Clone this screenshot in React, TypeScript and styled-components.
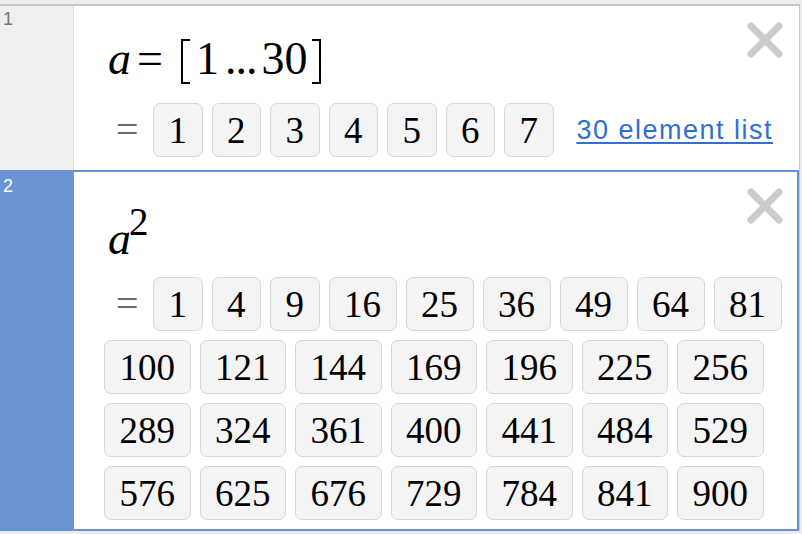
import React from "react";
import styled, { createGlobalStyle } from "styled-components";

const GlobalStyle = createGlobalStyle`
  html, body {
    margin: 0;
    padding: 0;
    background: #ececec;
  }
  body {
    font-family: "Liberation Sans", Arial, sans-serif;
  }
`;

const BLUE = "#6a93d4";

// Layout
const Page = styled.div`
  width: 802px;
  height: 534px;
  padding-top: 4px;
  box-sizing: border-box;
  background: #ececec;
  overflow: hidden;
`;

const Panel = styled.div`
  width: 800px;
  border-top: 2px solid #c6c6c6;
  border-right: 1px solid #c6c6c6;
  box-sizing: border-box;
  background: #fff;
`;

const Row = styled.div<{ $height: number }>`
  display: flex;
  height: ${(p) => p.$height}px;
`;

const Gutter = styled.div<{ $active?: boolean; $padTop: number }>`
  width: 74px;
  flex: none;
  box-sizing: border-box;
  padding: ${(p) => p.$padTop}px 0 0 3px;
  background: ${(p) => (p.$active ? BLUE : "#efefef")};
  border-right: 1px solid ${(p) => (p.$active ? BLUE : "#e0e0e0")};
  color: ${(p) => (p.$active ? "#fff" : "#777")};
  font-size: 18px;
  line-height: 20px;
`;

const Cell = styled.div<{ $active?: boolean; $padTop: number }>`
  position: relative;
  flex: 1;
  box-sizing: border-box;
  padding: ${(p) => p.$padTop}px 0 0 30px;
  border: ${(p) => (p.$active ? `2px solid ${BLUE}` : "none")};
  border-left: none;
`;

const CloseButton = styled.button<{ $right: number }>`
  position: absolute;
  top: 16px;
  right: ${(p) => p.$right}px;
  width: 36px;
  height: 36px;
  padding: 0;
  border: none;
  background: none;
  cursor: pointer;
`;

// Math
const MathLine = styled.div`
  margin-left: 4px;
  height: 46px;
  white-space: nowrap;
  font-family: "Liberation Serif", "Times New Roman", serif;
  font-size: 46px;
  line-height: 46px;
  color: #000;
`;

const Var = styled.span`
  font-style: italic;
`;

const Op = styled.span`
  margin: 0 18px 0 6px;
`;

const Bracket = styled.span<{ $side: "left" | "right" }>`
  display: inline-block;
  box-sizing: border-box;
  width: 9px;
  height: 45px;
  vertical-align: -10px;
  border: 2px solid #000;
  ${(p) => (p.$side === "left" ? "border-right: none;" : "border-left: none;")}
  margin-left: ${(p) => (p.$side === "left" ? "0" : "5px")};
  margin-right: ${(p) => (p.$side === "left" ? "6px" : "0")};
`;

const Dots = styled.span`
  margin: 0 5px 0 6px;
  letter-spacing: -1px;
`;

const Sup = styled.span`
  font-size: 39px;
  vertical-align: 19px;
  line-height: 0;
  margin-left: -2px;
`;

// Result list
const Results = styled.div<{ $gapTop: number }>`
  display: flex;
  flex-wrap: wrap;
  align-items: center;
  gap: 9px;
  margin-top: ${(p) => p.$gapTop}px;
  width: 690px;
`;

const Equals = styled.span`
  width: 40px;
  box-sizing: border-box;
  padding-left: 12px;
  font-family: "Liberation Serif", "Times New Roman", serif;
  font-size: 40px;
  line-height: 40px;
  color: #6b6b6b;
`;

const Chip = styled.span`
  display: inline-flex;
  align-items: center;
  justify-content: center;
  height: 54px;
  padding: 0 14.5px;
  box-sizing: border-box;
  background: #f4f4f4;
  border: 1.5px solid #d6d6d6;
  border-radius: 7px;
  font-family: "Liberation Serif", "Times New Roman", serif;
  font-size: 37px;
  line-height: 1;
  color: #000;
`;

const MoreLink = styled.a`
  margin-left: 14px;
  color: #2f6fd6;
  font-family: "Liberation Sans", Arial, sans-serif;
  font-size: 27px;
  letter-spacing: 1.5px;
  text-decoration: underline;
  text-underline-offset: 3px;
  text-decoration-thickness: 2px;
  cursor: pointer;
`;

const CloseIcon: React.FC = () => (
  <svg width="36" height="36" viewBox="0 0 36 36">
    <path
      d="M4 4 L32 32 M32 4 L4 32"
      stroke="#cccccc"
      strokeWidth="7"
      strokeLinecap="round"
    />
  </svg>
);

const squares = Array.from({ length: 30 }, (_, i) => (i + 1) * (i + 1));
const firstSeven = [1, 2, 3, 4, 5, 6, 7];

const App: React.FC = () => {
  return (
    <Page>
      <GlobalStyle />
      <Panel>
        <Row $height={164}>
          <Gutter $padTop={3}>1</Gutter>
          <Cell $padTop={30}>
            <MathLine>
              <Var>a</Var>
              <Op>=</Op>
              <Bracket $side="left" />
              <span>1</span>
              <Dots>...</Dots>
              <span>30</span>
              <Bracket $side="right" />
            </MathLine>
            <Results $gapTop={21}>
              <Equals>=</Equals>
              {firstSeven.map((n) => (
                <Chip key={n}>{n}</Chip>
              ))}
              <MoreLink>30 element list</MoreLink>
            </Results>
            <CloseButton $right={16} aria-label="Delete">
              <CloseIcon />
            </CloseButton>
          </Cell>
        </Row>
        <Row $height={361}>
          <Gutter $active $padTop={6}>
            2
          </Gutter>
          <Cell $active $padTop={44}>
            <MathLine>
              <Var>a</Var>
              <Sup>2</Sup>
            </MathLine>
            <Results $gapTop={15}>
              <Equals>=</Equals>
              {squares.map((n) => (
                <Chip key={n}>{n}</Chip>
              ))}
            </Results>
            <CloseButton $right={14} aria-label="Delete">
              <CloseIcon />
            </CloseButton>
          </Cell>
        </Row>
      </Panel>
    </Page>
  );
};

export default App;
